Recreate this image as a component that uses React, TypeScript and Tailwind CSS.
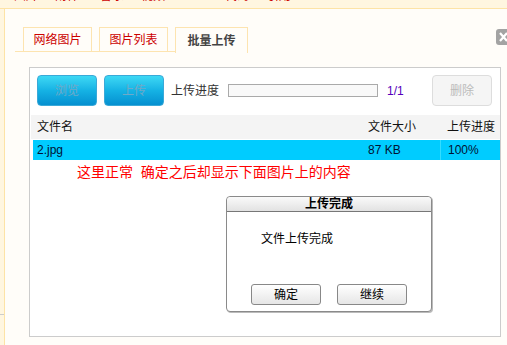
import React from 'react';

const cjk = { fontFamily: '"Liberation Sans", "Noto Sans CJK SC", sans-serif' };

const TopLinks = () => {
  const items = [
    { t: '图片', c: 'text-[#cc0000]', w: 'w-[41px]' },
    { t: '附件', c: 'text-[#cc0000]', w: 'w-[45px]' },
    { t: '音乐', c: 'text-[#cc0000]', w: 'w-[41px]' },
    { t: '视频', c: 'text-[#cc0000]', w: 'w-[37px]' },
    { t: 'Flash', c: 'text-[#ee00aa]', w: 'w-[47px]' },
    { t: '代码', c: 'text-[#cc0000]', w: 'w-[42px]' },
    { t: '引用', c: 'text-[#cc0000]', w: 'w-[40px]' },
  ];
  return (
    <div className="h-[9px] shrink-0 overflow-hidden border-b border-[#fde3a6] bg-[#fff6e0]">
      <div className="flex pl-[14px] -mt-[11px] text-[12px] leading-[14px]">
        {items.map((i) => (
          <span key={i.t} className={`${i.w} ${i.c}`}>{i.t}</span>
        ))}
      </div>
    </div>
  );
};

const Tabs = () => (
  <div className="flex items-end ml-[10px] mt-[18px] h-[25px]">
    <div className="w-[8px] h-full border-b border-[#fde4b0]" />
    <div className="w-[69px] h-[25px] border border-[#fde4b0] flex items-center justify-center text-[12px] text-[#cc0000]">网络图片</div>
    <div className="w-[7px] h-full border-b border-[#fde4b0]" />
    <div className="w-[69px] h-[25px] border border-[#fde4b0] flex items-center justify-center text-[12px] text-[#cc0000]">图片列表</div>
    <div className="w-[7px] h-full border-b border-[#fde4b0]" />
    <div className="w-[73px] h-[26px] -mb-px border border-b-0 border-[#fde4b0] bg-[#fffdf9] flex items-center justify-center text-[12px] font-bold text-[#444]">批量上传</div>
  </div>
);

const BlueButton = ({ label }: { label: string }) => (
  <button className="w-[60px] h-[31px] rounded-[4px] border border-[#3aa9d8] bg-gradient-to-b from-[#3cd8f4] via-[#15b2e4] to-[#0690d0] text-[12px] text-[#6fa9c8]">
    {label}
  </button>
);

const Dialog = () => (
  <div className="absolute left-[196px] top-[128px] w-[206px] h-[116px] border border-[#8a8a8a] rounded-[4px] bg-white shadow-[1px_1px_0_#bbb] flex flex-col">
    <div className="h-[15px] rounded-t-[4px] border-b border-[#777] bg-gradient-to-b from-[#fafafa] to-[#e2e2e2] flex items-center justify-center text-[12px] font-bold text-black leading-none">
      上传完成
    </div>
    <div className="pl-[34px] pt-[18px] text-[12px] text-black">文件上传完成</div>
    <div className="mt-auto mb-[6px] flex justify-center gap-[16px]">
      <button className="w-[70px] h-[21px] rounded-[3px] border border-[#888] bg-gradient-to-b from-[#ffffff] to-[#e6e6e6] text-[12px] text-black">确定</button>
      <button className="w-[70px] h-[21px] rounded-[3px] border border-[#888] bg-gradient-to-b from-[#ffffff] to-[#e6e6e6] text-[12px] text-black">继续</button>
    </div>
  </div>
);

const UploadBox = () => (
  <div className="relative ml-[24px] mt-[15px] w-[472px] h-[270px] border border-[#cccccc] bg-white">
    <div className="flex items-center pl-[7px] pr-[8px] pt-[7px]">
      <BlueButton label="浏览" />
      <div className="w-[7px]" />
      <BlueButton label="上传" />
      <span className="ml-[7px] text-[12px] text-[#333]">上传进度</span>
      <div className="ml-[9px] w-[150px] h-[13px] border border-[#aaaaaa] bg-[#f9f9f9]" />
      <span className="ml-[9px] text-[12px] text-[#5500bb]">1/1</span>
      <button className="ml-auto w-[60px] h-[31px] rounded-[4px] border border-[#dddddd] bg-[#f5f5f5] text-[12px] text-[#bbbbbb]">删除</button>
    </div>
    <div className="mt-[9px] ml-[1px] h-[24px] bg-[#f4f4f4] flex items-center text-[12px] text-[#111]">
      <span className="pl-[6px] w-[337px]">文件名</span>
      <span className="w-[79px]">文件大小</span>
      <span>上传进度</span>
    </div>
    <div className="mt-[1px] ml-[3px] h-[20px] bg-[#00ccff] flex items-center text-[12px] text-[#001133]">
      <span className="pl-[4px] w-[335px]">2.jpg</span>
      <span className="w-[73px] h-full flex items-center border-r border-[#33ddff]">87 KB</span>
      <span className="pl-[7px]">100%</span>
    </div>
    <div className="mt-[4px] ml-[47px] text-[14px] leading-[17px] text-[#ff0000] whitespace-pre">这里正常  确定之后却显示下面图片上的内容</div>
    <Dialog />
  </div>
);

export default function App() {
  return (
    <div className="w-[507px] h-[345px] overflow-hidden bg-[#fff6e0] flex flex-col" style={cjk}>
      <TopLinks />
      <div className="flex-1 flex">
        <div className="w-[4px] flex flex-col">
          <div className="flex-1" />
          <div className="h-[1px] bg-[#cccccc] mb-[30px]" />
        </div>
        <div className="relative flex-1 border-l border-[#fde3a6] bg-[#fffdf9]">
          <Tabs />
          <UploadBox />
          <div className="absolute right-0 top-[20px] w-[11px] h-[16px] rounded-l-[3px] bg-[#a3a3a3] overflow-hidden">
            <svg width="14" height="16" viewBox="0 0 14 16" className="absolute left-[2px] top-0">
              <path d="M2 4 L9 12 M9 4 L2 12" stroke="#ffffff" strokeWidth="2.2" />
            </svg>
          </div>
        </div>
      </div>
    </div>
  );
}
